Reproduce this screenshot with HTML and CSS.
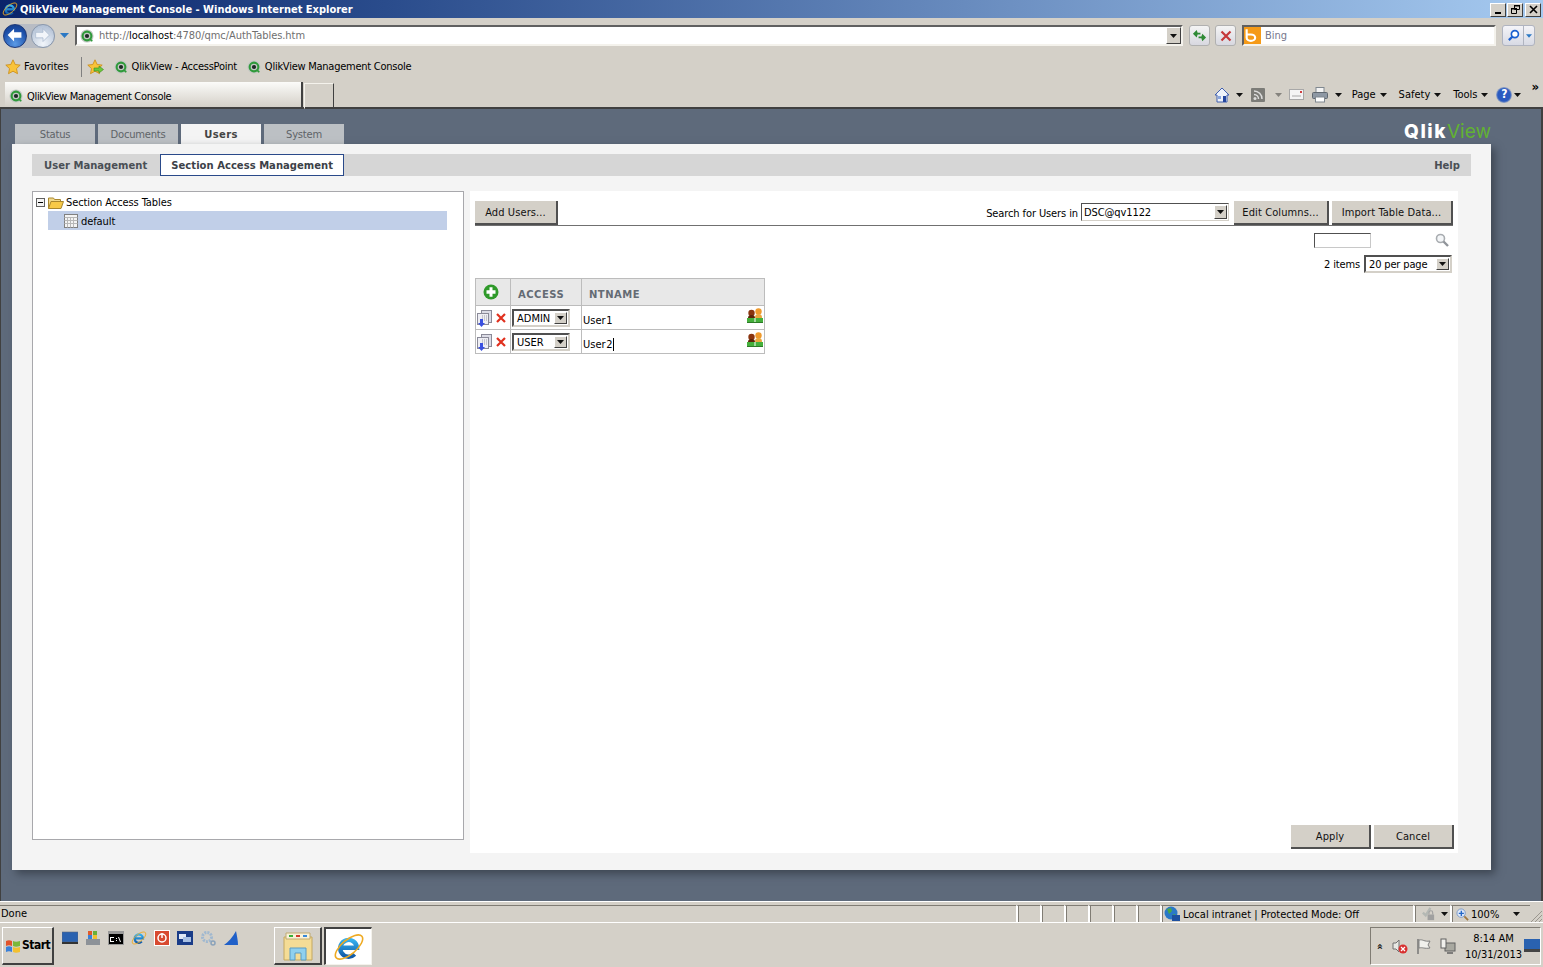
FILE: index.html
```html
<!DOCTYPE html>
<html lang="en">
<head>
<meta charset="utf-8">
<title>QlikView Management Console</title>
<link rel="stylesheet" href="styles.css">
</head>
<body>
<svg class="defs" width="0" height="0">
  <defs>
    <linearGradient id="ieblue" x1="0" y1="0" x2="0" y2="1"><stop offset="0" stop-color="#35b0ee"/><stop offset="1" stop-color="#125aa8"/></linearGradient>
    <symbol id="qv" viewBox="0 0 16 16">
      <circle cx="8" cy="8" r="7.500" fill="#c4c8c4"/>
      <circle cx="8" cy="8" r="5" fill="none" stroke="#2f9a3a" stroke-width="2.400"/>
      <circle cx="8" cy="8" r="2.400" fill="#1f2a26"/>
      <path d="M11 11l3 3" stroke="#2f9a3a" stroke-width="2"/>
    </symbol>
    <symbol id="ie" viewBox="0 0 40 40">
      <path d="M10 21h20A10.500 10.500 0 1 0 27 29" fill="none" stroke="url(#ieblue)" stroke-width="5.500"/>
      <ellipse cx="20" cy="20" rx="21" ry="9" transform="rotate(-40 20 20)" fill="none" stroke="#eeaa22" stroke-width="2"/>
    </symbol>
    <symbol id="docs" viewBox="0 0 15 17">
      <rect x="4.500" y=".5" width="10" height="12" fill="#dcdce6" stroke="#8a8a98"/>
      <rect x=".5" y="3.500" width="11" height="11" fill="#eeeef4" stroke="#8a8a98"/>
      <path d="M5 6h5M5 8h5M5 10h5" stroke="#9c9ca8" stroke-dasharray="1 1"/>
      <path d="M3 9h3v4h2l-3.500 4L1 13h2z" fill="#3a50e0"/>
    </symbol>
    <symbol id="x" viewBox="0 0 10 10">
      <path d="M1 1l8 8M9 1l-8 8" stroke="#e0301e" stroke-width="2.200"/>
    </symbol>
    <symbol id="people" viewBox="0 0 16 15">
      <circle cx="11.500" cy="3.500" r="3.200" fill="#ef9a2c"/>
      <path d="M8 10c0-3 1-4 3.500-4S15 7 15 10z" fill="#e9a63c"/>
      <circle cx="4.500" cy="5" r="3.200" fill="#8a340e"/>
      <path d="M1 10c0-2 1-3 3.500-3S8 8 8 10z" fill="#5e2408"/>
      <path d="M0 10h7.500v4H0zM8.500 10H16v4H8.500z" fill="#45b03c"/>
      <path d="M0 14h16v1H0z" fill="#2c7a26"/>
    </symbol>
    <symbol id="drop" viewBox="0 0 7 4"><path d="M0 0h7L3.500 4z" fill="#111"/></symbol>
    <symbol id="star" viewBox="0 0 16 16">
      <path d="M8 .8l2.200 4.700 5 .6-3.700 3.500 1 5.100L8 12.200 3.500 14.700l1-5.100L.8 6.100l5-.6z" fill="#f9c33a" stroke="#c98a14" stroke-width=".8"/>
    </symbol>
  </defs>
</svg>

<header class="titlebar">
  <div class="titlebar-left">
    <svg class="ico-16"><use href="#ie"/></svg>
    <span class="title-text">QlikView Management Console - Windows Internet Explorer</span>
  </div>
  <div class="wincontrols">
    <span class="winbtn"><svg class="glyph" viewBox="0 0 9 9"><path d="M1 7h6v2H1z" fill="#000"/></svg></span>
    <span class="winbtn"><svg class="glyph" viewBox="0 0 9 9"><path d="M3.500 .5h5v4h-5zM.5 3.500h5v5h-5z" fill="none" stroke="#000"/><path d="M3 0h6v1.500H3zM0 3h6v1.500H0z"/></svg></span>
    <span class="winbtn winbtn-close"><svg class="glyph" viewBox="0 0 9 9"><path d="M1 1l7 7M8 1L1 8" stroke="#000" stroke-width="1.600"/></svg></span>
  </div>
</header>

<div class="navbar">
  <div class="navpill">
    <span class="navround navround-back"><svg viewBox="0 0 24 24"><path d="M4 11l7-7v4h8v6h-8v4z" fill="#fff"/></svg></span>
    <span class="navround navround-fwd"><svg viewBox="0 0 24 24"><path d="M19 11l-7-7v4H4v6h8v4z" fill="#f2f5fa" stroke="#9fb0c8" stroke-width=".7"/></svg></span>
  </div>
  <svg class="nav-drop" viewBox="0 0 9 5"><path d="M0 0h9L4.500 5z" fill="#2b78c4"/></svg>
  <div class="addressbar">
    <svg class="ico-14"><use href="#qv"/></svg>
    <span class="url"><span class="url-dim">http://</span>localhost<span class="url-dim">:4780/qmc/AuthTables.htm</span></span>
    <span class="scrollbtn"><svg class="arrow-s"><use href="#drop"/></svg></span>
  </div>
  <span class="glassbtn glassbtn-refresh">
    <svg viewBox="0 0 16 16"><path d="M1 6l4-4 1 3h3v2H6l-1 3zM15 10l-4 4-1-3H7V9h3l1-3z" fill="#2f8a36"/></svg>
  </span>
  <span class="glassbtn glassbtn-stop">
    <svg viewBox="0 0 12 12"><path d="M1.500 1.500l9 9M10.500 1.500l-9 9" stroke="#c5383a" stroke-width="2.200"/></svg>
  </span>
  <div class="searchbar">
    <span class="bing"><svg viewBox="0 0 16 16"><rect width="16" height="16" fill="#f59a17"/><path d="M2.500 2v8a4 3 0 104-3H3" fill="none" stroke="#fff" stroke-width="2"/></svg></span>
    <span class="bing-label">Bing</span>
  </div>
  <div class="searchgo">
    <span class="searchgo-main"><svg viewBox="0 0 14 14"><circle cx="8.500" cy="5.500" r="3.800" fill="#fff" stroke="#1a5fd0" stroke-width="1.800"/><path d="M6 8l-4 4" stroke="#1a5fd0" stroke-width="2.400"/></svg></span>
    <span class="searchgo-more"><svg viewBox="0 0 7 4"><path d="M0 0h7L3.500 4z" fill="#2b78c4"/></svg></span>
  </div>
</div>

<div class="favbar">
  <svg class="ico-16 fav-star"><use href="#star"/></svg>
  <span class="fav-label">Favorites</span>
  <span class="fav-sep"></span>
  <span class="fav-add">
    <svg viewBox="0 0 17 16"><path d="M8 .8l2.200 4.700 5 .6-3.700 3.500 1 5.100L8 12.200 3.500 14.700l1-5.100L.8 6.100l5-.6z" fill="#f9c33a" stroke="#c98a14" stroke-width=".8"/><path d="M7 9h5V7l4.500 3.500L12 14v-2H7z" fill="#6cc83c" stroke="#3a8a20" stroke-width=".6"/></svg>
  </span>
  <svg class="ico-14 fav-link-ico"><use href="#qv"/></svg>
  <span class="fav-link">QlikView - AccessPoint</span>
  <svg class="ico-14 fav-link-ico fav-link-ico-2"><use href="#qv"/></svg>
  <span class="fav-link">QlikView Management Console</span>
</div>

<div class="tabbar">
  <div class="ietab">
    <svg class="ico-14"><use href="#qv"/></svg>
    <span class="ietab-label">QlikView Management Console</span>
  </div>
  <span class="ietab-new"></span>
  <div class="cmdbar">
    <svg class="cmd-ico" viewBox="0 0 16 16"><path d="M8 1L1 8h2v7h10V8h2z" fill="#eef2fa" stroke="#3f5fb0"/><rect x="9" y="9" width="3" height="6" fill="#23459e"/><rect x="4" y="9" width="3" height="3" fill="#8aa6dc"/></svg>
    <svg class="arrow-s cmd-drop-1"><use href="#drop"/></svg>
    <svg class="cmd-ico cmd-feed" viewBox="0 0 14 14"><rect width="14" height="14" rx="1" fill="#7c7c78"/><circle cx="4" cy="10.500" r="1.500" fill="#ddd"/><path d="M3 6.500a4.500 4.500 0 014.500 4.500M3 3a8 8 0 018 8" fill="none" stroke="#ddd" stroke-width="1.500"/></svg>
    <svg class="arrow-s cmd-drop-dim"><use href="#drop"/></svg>
    <svg class="cmd-ico cmd-mail" viewBox="0 0 16 12"><rect x=".5" y=".5" width="14" height="10" fill="#f4f4f4" stroke="#a8a8a8"/><path d="M3 7h9" stroke="#a8a8a8"/><rect x="11" y="2" width="2" height="2" fill="#d04040"/></svg>
    <svg class="cmd-ico cmd-print" viewBox="0 0 16 16"><rect x="4" y=".5" width="8" height="5" fill="#f4f4f4" stroke="#808890"/><rect x=".5" y="5.500" width="15" height="6" rx="1" fill="#8e98a4" stroke="#606870"/><rect x="3.500" y="10" width="9" height="5" fill="#fff" stroke="#808890"/></svg>
    <svg class="arrow-s cmd-drop-2"><use href="#drop"/></svg>
    <span class="cmd-menu">Page</span><svg class="arrow-s"><use href="#drop"/></svg>
    <span class="cmd-menu cmd-menu-next">Safety</span><svg class="arrow-s"><use href="#drop"/></svg>
    <span class="cmd-menu cmd-menu-next">Tools</span><svg class="arrow-s"><use href="#drop"/></svg>
    <span class="help-ico">?</span><svg class="arrow-s help-drop"><use href="#drop"/></svg>
    <span class="cmd-more">»</span>
  </div>
</div>

<main class="viewport">
  <div class="apptop">
    <nav class="apptabs">
      <span class="apptab">Status</span>
      <span class="apptab">Documents</span>
      <span class="apptab apptab-active">Users</span>
      <span class="apptab">System</span>
    </nav>
    <div class="logo"><span class="logo-qlik">Qlik</span><span class="logo-view">View</span></div>
  </div>
  <section class="sheet">
    <div class="subnav">
      <span class="subtab">User Management</span>
      <span class="subtab subtab-active">Section Access Management</span>
      <span class="subnav-help">Help</span>
    </div>
    <div class="columns">
      <aside class="tree">
        <div class="tree-root">
          <span class="tree-toggle"></span>
          <svg class="tree-folder" viewBox="0 0 16 13"><path d="M.5 12.500V2h5l1 1.500h6V6" fill="#f2d98a" stroke="#a8862e"/><path d="M.5 12.500L3 5.500h12.500l-2.500 7z" fill="#f7c948" stroke="#a8862e"/></svg>
          <span>Section Access Tables</span>
        </div>
        <div class="tree-item">
          <svg class="tree-table" viewBox="0 0 14 14"><rect x=".5" y=".5" width="13" height="13" fill="#f4f4f4" stroke="#808080"/><path d="M.5 3.500h13M3.500 3.500v10M6.500 3.500v10M9.500 3.500v10M.5 6.500h13M.5 9.500h13" stroke="#b8b8b8"/></svg>
          <span>default</span>
        </div>
      </aside>
      <div class="editor">
        <div class="toolbar">
          <span class="flatbtn flatbtn-add">Add Users...</span>
          <div class="toolbar-right">
            <span>Search for Users in</span>
            <span class="select select-dsc">DSC@qv1122<span class="select-arrow"><svg class="arrow-xs"><use href="#drop"/></svg></span></span>
            <span class="flatbtn flatbtn-edit">Edit Columns...</span>
            <span class="flatbtn flatbtn-import">Import Table Data...</span>
          </div>
        </div>
        <div class="filter-row">
          <span class="filter-input"></span>
          <svg class="filter-ico" viewBox="0 0 14 14"><circle cx="5.500" cy="5.500" r="4" fill="#f4f6f8" stroke="#a8acb0" stroke-width="1.600"/><path d="M8.500 8.500l4.500 4.500" stroke="#90949a" stroke-width="2.400"/></svg>
        </div>
        <div class="pager-row">
          <span>2 items</span>
          <span class="select select-page">20 per page<span class="select-arrow"><svg class="arrow-xs"><use href="#drop"/></svg></span></span>
        </div>
        <table class="grid">
          <thead>
            <tr>
              <th class="col-a"><svg class="add-ico" viewBox="0 0 16 16"><circle cx="8" cy="8" r="7.500" fill="#2f9a2a"/><path d="M3.500 6.300h3v-3h3v3h3v3.400h-3v3h-3v-3h-3z" fill="#fff"/></svg></th>
              <th class="col-b">ACCESS</th>
              <th class="col-c">NTNAME</th>
            </tr>
          </thead>
          <tbody>
            <tr>
              <td class="cell-actions"><svg class="row-docs"><use href="#docs"/></svg><svg class="row-x"><use href="#x"/></svg></td>
              <td class="cell-access"><span class="select select-role">ADMIN<span class="select-arrow"><svg class="arrow-xs"><use href="#drop"/></svg></span></span></td>
              <td class="cell-name"><span class="name-text">User 1</span><svg class="row-people"><use href="#people"/></svg></td>
            </tr>
            <tr>
              <td class="cell-actions"><svg class="row-docs"><use href="#docs"/></svg><svg class="row-x"><use href="#x"/></svg></td>
              <td class="cell-access"><span class="select select-role">USER<span class="select-arrow"><svg class="arrow-xs"><use href="#drop"/></svg></span></span></td>
              <td class="cell-name"><span class="name-text name-caret">User 2</span><svg class="row-people"><use href="#people"/></svg></td>
            </tr>
          </tbody>
        </table>
        <div class="actions">
          <span class="flatbtn flatbtn-foot">Apply</span>
          <span class="flatbtn flatbtn-foot">Cancel</span>
        </div>
      </div>
    </div>
  </section>
</main>

<div class="statusbar">
  <span class="status-done">Done</span>
  <span class="status-cell"></span><span class="status-cell"></span><span class="status-cell"></span><span class="status-cell"></span><span class="status-cell"></span><span class="status-cell"></span>
  <span class="status-zone">
    <svg class="zone-ico" viewBox="0 0 16 16"><circle cx="7" cy="7" r="6.500" fill="#2a78c8"/><path d="M3 3l4-1 1 3-3 3zM8 9l3-1 1 3-3 2z" fill="#48a848"/><rect x="8" y="9" width="8" height="6" fill="#1e50a0"/></svg>
    Local intranet | Protected Mode: Off
  </span>
  <span class="status-sec">
    <svg class="sec-ico" viewBox="0 0 16 16"><path d="M2 6l3 3 5-8" fill="none" stroke="#b4b8b4" stroke-width="2.500"/><rect x="7" y="8" width="7" height="6" fill="#a0a0a0"/><path d="M8.500 8V6a2 2 0 014 0v2" fill="none" stroke="#a0a0a0" stroke-width="1.200"/></svg>
    <svg class="arrow-s"><use href="#drop"/></svg>
  </span>
  <span class="status-zoom">
    <svg class="zoom-ico" viewBox="0 0 14 14"><circle cx="5.500" cy="5.500" r="4.500" fill="#dfe8f8" stroke="#7898c8"/><path d="M3 5h2V3h1.500v2h2v1.500h-2v2H5v-2H3z" fill="#2468c8"/><path d="M9 9l4 4" stroke="#a07840" stroke-width="2"/></svg>
    100%
    <svg class="arrow-s zoom-drop"><use href="#drop"/></svg>
  </span>
  <svg class="grip" viewBox="0 0 12 12"><path d="M12 1L1 12M12 5l-7 7M12 9l-3 3" stroke="#9a968e"/></svg>
</div>

<footer class="taskbar">
  <span class="startbtn">
    <svg class="flag" viewBox="0 0 16 16"><path d="M1 3c2-1 4-1 6 0v5c-2-1-4-1-6 0z" fill="#e2532a"/><path d="M8 3c2 1 4 1 7 0v5c-3 1-5 1-7 0z" fill="#7ab83a"/><path d="M1 9c2-1 4-1 6 0v5c-2-1-4-1-6 0z" fill="#3a80d8"/><path d="M8 9c2 1 4 1 7 0v5c-3 1-5 1-7 0z" fill="#f2c030"/></svg>
    Start
  </span>
  <div class="quick">
    <svg class="quick-ico" viewBox="0 0 16 16"><rect y="2" width="16" height="10" fill="#2a62b0" stroke="#5a6a80" stroke-width=".6"/><rect y="12" width="16" height="2" fill="#333"/></svg>
    <svg class="quick-ico" viewBox="0 0 16 16"><rect x="1" y="9" width="14" height="6" fill="#8d9298"/><rect x="3" y="1" width="4" height="4" fill="#e05a2a"/><rect x="8" y="1" width="4" height="4" fill="#6ab03a"/><rect x="3" y="5" width="4" height="4" fill="#3a80d8"/><rect x="8" y="5" width="4" height="4" fill="#f2c030"/></svg>
    <svg class="quick-ico" viewBox="0 0 16 16"><rect y="1" width="16" height="14" fill="#9a9a9a"/><rect x="1" y="4" width="14" height="10" fill="#000"/><path d="M3 7h3v1H3v3h3v1H2V7zM8 8h1v1H8zM8 10h1v1H8zM10 7h1l2 5h-1z" fill="#fff"/></svg>
    <svg class="quick-ico"><use href="#ie"/></svg>
    <svg class="quick-ico" viewBox="0 0 16 16"><rect width="16" height="16" fill="#fff"/><rect x="1" y="1" width="14" height="14" fill="#d84a30"/><circle cx="8" cy="8" r="4" fill="none" stroke="#fff" stroke-width="1.500"/><path d="M8 3v5" stroke="#fff" stroke-width="1.500"/></svg>
    <svg class="quick-ico" viewBox="0 0 16 16"><rect y="1" width="16" height="14" fill="#1a3c88"/><rect x="2" y="4" width="7" height="5" fill="#dfe8f6"/><rect x="6" y="7" width="8" height="5" fill="#a8c0e4"/></svg>
    <svg class="quick-ico" viewBox="0 0 16 16"><circle cx="7" cy="7" r="4.500" fill="none" stroke="#a0b8d0" stroke-width="3" stroke-dasharray="2 1"/><circle cx="13" cy="13" r="2" fill="none" stroke="#8aa2ba" stroke-width="1.500"/></svg>
    <svg class="quick-ico" viewBox="0 0 16 16"><path d="M1 15C5 12 10 7 13 1c1 5 2 10 2 14z" fill="#2060c8"/></svg>
  </div>
  <span class="taskbtn">
    <svg viewBox="0 0 32 32"><path d="M2 7h28v23H2z" fill="#f4dc96" stroke="#c4a860"/><path d="M4 3h24v6H4z" fill="#f8f2da" stroke="#c0aa70"/><path d="M7 5h4v2H7z" fill="#38b038"/><path d="M14 5h4v2h-4z" fill="#d03c2c"/><path d="M21 5h4v2h-4z" fill="#3888d8"/><path d="M8 18h16v12h-5v-7h-6v7H8z" fill="#8fd0ee" stroke="#5a9cc4"/></svg>
  </span>
  <span class="taskbtn taskbtn-active"><svg viewBox="0 0 40 40"><use href="#ie"/></svg></span>
  <div class="tray">
    <span class="tray-up">»</span>
    <svg class="tray-ico" viewBox="0 0 16 16"><path d="M1 5h3l3-3v12l-3-3H1z" fill="#e8e8e4" stroke="#707070"/><circle cx="11" cy="11" r="4.500" fill="#d83030"/><path d="M9 9l4 4M13 9l-4 4" stroke="#fff" stroke-width="1.200"/></svg>
    <svg class="tray-ico" viewBox="0 0 16 16"><path d="M2 1v15" stroke="#707070" stroke-width="1.400"/><path d="M3 2c4-1 5 2 11 1l-2 4 2 3c-6 1-7-1-11 0z" fill="#f0f0ec" stroke="#808080"/></svg>
    <svg class="tray-ico" viewBox="0 0 16 16"><rect x="5" y="5" width="10" height="8" fill="#a8a8a0" stroke="#606060"/><rect x="1" y="1" width="5" height="9" fill="#f0f0ec" stroke="#606060"/><path d="M7 15h6" stroke="#606060" stroke-width="1.500"/></svg>
    <span class="clock"><span>8:14 AM</span><span>10/31/2013</span></span>
    <svg class="tray-desk" viewBox="0 0 16 16"><rect y="1" width="16" height="10" fill="#2a62b0"/><rect y="11" width="16" height="3" fill="#444"/></svg>
  </div>
</footer>
</body>
</html>
```
FILE: styles.css
```css
* { box-sizing: border-box; }
html, body { margin: 0; padding: 0; }
body {
  width: 1543px;
  height: 967px;
  overflow: hidden;
  display: flex;
  flex-direction: column;
  background: #d4d0c8;
  color: #000;
  font-family: "DejaVu Sans", sans-serif;
  font-stretch: condensed;
  font-size: 11px;
  line-height: 13px;
  white-space: nowrap;
}
svg { display: block; flex: none; }
.defs { position: absolute; }
.ico-16 { width: 16px; height: 16px; }
.ico-14 { width: 14px; height: 14px; }
.arrow-s { width: 7px; height: 4px; }
.arrow-xs { width: 7px; height: 4px; }

/* Title bar */
.titlebar {
  height: 18px;
  flex: none;
  display: flex;
  justify-content: space-between;
  align-items: center;
  padding: 0 2px;
  background: linear-gradient(90deg, #0a246a 0%, #2a4c8c 25%, #a6caf0 100%);
}
.titlebar-left { display: flex; align-items: center; gap: 2px; }
.title-text { color: #fff; font-weight: 700; font-stretch: condensed; font-size: 11px; }
.wincontrols { display: flex; padding-top: 1px; }
.winbtn {
  width: 16px; height: 14px; margin-left: 1px;
  display: flex; align-items: center; justify-content: center;
  background: #d4d0c8;
  border: 1px solid; border-color: #fff #404040 #404040 #fff;
}
.winbtn-close { margin-left: 2px; }
.glyph { width: 9px; height: 9px; }

/* Nav bar */
.navbar { height: 30px; flex: none; display: flex; align-items: center; padding: 5px 6px 0 3px; }
.navpill { display: flex; gap: 4px; width: 52px; background: #b8bcc4; border-radius: 12px; }
.navround { width: 24px; height: 24px; border-radius: 50%; display: block; }
.navround svg { width: 22px; height: 22px; }
.navround-back { background: radial-gradient(circle at 50% 85%, #5a9ae6, #1c4ea8 65%, #153a80); border: 1px solid #203a78; }
.navround-fwd { background: radial-gradient(circle at 50% 85%, #f2f6fb, #b4c2d6 80%); border: 1px solid #8a98ac; }
.nav-drop { width: 9px; height: 5px; margin-left: 5px; }
.addressbar {
  margin-left: 6px; width: 1108px; height: 21px;
  display: flex; align-items: center; padding-left: 3px;
  background: #fff;
  border: 2px solid; border-color: #606060 #f4f2ec #f4f2ec #606060;
}
.url { margin-left: 5px; color: #000; flex: 1; letter-spacing: -.05px; }
.url-dim { color: #6f6f6f; }
.scrollbtn {
  width: 15px; height: 17px; display: flex; align-items: center; justify-content: center;
  background: #d4d0c8; border: 1px solid; border-color: #fff #404040 #404040 #fff;
}
.glassbtn {
  width: 21px; height: 21px; display: flex; align-items: center; justify-content: center;
  border: 1px solid #b0b0b0; border-radius: 3px;
  background: linear-gradient(#f4f4f4, #d8d8e0);
}
.glassbtn svg { width: 15px; height: 15px; }
.glassbtn-stop svg { width: 12px; height: 12px; }
.glassbtn-refresh { margin-left: 6px; }
.glassbtn-stop { margin-left: 5px; }
.searchbar {
  margin-left: 6px; width: 254px; height: 21px;
  display: flex; align-items: center;
  background: #fff;
  border: 2px solid; border-color: #606060 #f4f2ec #f4f2ec #606060;
}
.bing { width: 17px; height: 17px; display: block; }
.bing svg { width: 17px; height: 17px; }
.bing-label { margin-left: 4px; color: #77778c; }
.searchgo {
  margin-left: 6px; width: 33px; height: 21px; display: flex;
  border: 1px solid #b0b4c0; border-radius: 3px;
  background: linear-gradient(#f4f4f8, #d8dae4);
}
.searchgo-main { width: 21px; display: flex; align-items: center; justify-content: center; border-right: 1px solid #b0b4c0; }
.searchgo-main svg { width: 13px; height: 13px; }
.searchgo-more { flex: 1; display: flex; align-items: center; justify-content: center; }
.searchgo-more svg { width: 6px; height: 4px; }

/* Favorites */
.favbar { height: 32px; flex: none; display: flex; align-items: center; padding: 5px 0 0 5px; }
.fav-label { margin-left: 3px; }
.fav-sep { width: 1px; height: 20px; margin-left: 12px; background: #808080; }
.fav-add { margin-left: 5px; }
.fav-add svg { width: 17px; height: 16px; }
.fav-link-ico { margin-left: 10px; }
.fav-link-ico-2 { margin-left: 10px; }
.fav-link { margin-left: 4px; letter-spacing: -.25px; }

/* Tab row */
.tabbar { height: 29px; flex: none; display: flex; align-items: flex-end; border-bottom: 2px solid #404040; }
.ietab {
  margin-left: 5px; width: 296px; height: 25px; padding: 3px 0 0 4px;
  display: flex; align-items: center; gap: 4px;
  background: linear-gradient(#fbfbf9, #d4d0c8);
}
.ietab-label { letter-spacing: -.33px; }
.ietab-new {
  width: 30px; height: 25px;
  border-left: 2px solid #404040;
}
.ietab-new::after {
  content: ""; display: block; width: 28px; height: 24px; margin: 1px 0 0 1px;
  border: 1px solid; border-color: #f4f2ec #404040 transparent #f4f2ec;
}
.cmdbar { margin-left: auto; height: 25px; padding-right: 4px; display: flex; align-items: center; gap: 4px; }
.cmd-ico { width: 16px; height: 16px; }
.cmd-drop-1 { margin-left: 2px; }
.cmd-feed { width: 14px; height: 14px; margin-left: 4px; }
.cmd-drop-dim { margin-left: 6px; opacity: .4; }
.cmd-mail { margin-left: 3px; }
.cmd-print { margin-left: 3px; }
.cmd-drop-2 { margin-left: 3px; margin-right: 6px; }
.cmd-menu-next { margin-left: 8px; }
.help-ico {
  width: 16px; height: 16px; margin-left: 4px; border-radius: 50%;
  display: flex; align-items: center; justify-content: center;
  color: #fff; font-weight: 700; font-size: 12px;
  background: radial-gradient(circle, #2a5ac0 55%, #9aa8c4 70%);
}
.help-drop { margin-left: -2px; }
.cmd-more { align-self: flex-start; margin-top: -2px; margin-left: 6px; font-size: 13px; font-weight: 700; }

/* Main viewport */
.viewport {
  flex: 1; min-height: 0;
  display: flex; flex-direction: column;
  padding-top: 15px;
  background: #5e6a7b;
  border-left: 1px solid #404040;
  border-right: 2px solid #404040;
}
.apptop { flex: none; display: flex; justify-content: space-between; align-items: flex-end; margin-left: 14px; margin-right: 50px; height: 20px; }
.apptabs { display: flex; gap: 3px; }
.apptab {
  width: 80px; height: 20px; display: flex; align-items: center; justify-content: center;
  background: #bcc0c4; color: #5f6468;
  font-size: 10px; font-stretch: normal; letter-spacing: -.25px;
}
.apptab-active { background: #f4f4f4; color: #444; font-weight: 700; letter-spacing: .4px; }
.logo { height: 20px; font-family: Inter, "Liberation Sans", sans-serif; font-size: 19px; line-height: 16px; font-stretch: normal; }
.logo-qlik { color: #fff; font-weight: 800; letter-spacing: 1.500px; }
.logo-view { color: #62b233; font-weight: 400; letter-spacing: 0; }
.sheet {
  margin: 0 50px 31px 11px;
  flex: 1; min-height: 0;
  display: flex; flex-direction: column;
  padding: 10px 20px 17px;
  background: #f4f4f4;
  box-shadow: 4px 4px 8px rgba(40, 46, 56, .6);
}
.subnav {
  height: 22px; flex: none; display: flex; align-items: center;
  background: #d6d6d6; color: #4a4f55;
  font-size: 10px; font-weight: 700; font-stretch: normal; letter-spacing: .03px;
}
.subtab { padding: 0 12px; display: flex; align-items: center; height: 22px; }
.subtab-active { margin-left: 1px; width: 184px; padding: 0 10px; background: #fff; border: 1px solid #2a4a8a; color: #3c4148; }
.subnav-help { margin-left: auto; padding-right: 11px; }
.columns { flex: 1; min-height: 0; display: flex; margin-top: 15px; gap: 6px; }
.tree {
  flex: none; width: 432px; margin-bottom: 13px; padding: 2px 16px 0 3px;
  background: #fff; border: 1px solid #a8a8ac; letter-spacing: -.08px;
}
.tree-root { height: 17px; display: flex; align-items: center; }
.tree-toggle {
  width: 9px; height: 9px; margin-right: 3px;
  border: 1px solid #606060;
  background: linear-gradient(#000, #000) center/5px 1px no-repeat, #f4f4f4;
}
.tree-folder { width: 16px; height: 13px; margin-right: 2px; }
.tree-item {
  margin-left: 12px; height: 19px; padding: 1px 0 0 16px;
  display: flex; align-items: center; gap: 3px;
  background: #c1cfe8;
}
.tree-table { width: 14px; height: 14px; }
.editor {
  flex: 1; min-width: 0; display: flex; flex-direction: column;
  margin-right: 13px;
  padding: 10px 5px 4px;
  background: #fff;
}
.toolbar { flex: none; height: 25px; display: flex; justify-content: space-between; border-bottom: 1px solid #707070; }
.toolbar-right { display: flex; align-items: flex-start; letter-spacing: -.1px; }
.toolbar-right > span:first-child { margin-top: 6px; }
.flatbtn {
  height: 24px; display: flex; align-items: center; justify-content: center;
  padding-top: 1px;
  background: #d4d0c8; color: #111; letter-spacing: .1px;
  border-right: 2px solid #505050; border-bottom: 2px solid #505050;
}
.flatbtn-add { width: 83px; }
.flatbtn-edit { margin-left: 5px; width: 95px; }
.flatbtn-import { margin-left: 3px; width: 121px; }
.select {
  display: flex; align-items: center; position: relative;
  background: #fff;
  border: 2px solid; border-color: #505050 #d4d0c8 #d4d0c8 #505050;
}
.select-dsc { margin-left: 3px; margin-top: 2px; width: 148px; height: 18px; padding: 1px 0 0 2px; border-width: 1px; }
.select-arrow {
  position: absolute; right: 1px; top: 1px; bottom: 1px; width: 13px;
  display: flex; align-items: center; justify-content: center;
  background: #d4d0c8; border: 1px solid; border-color: #fff #404040 #404040 #fff;
}
.filter-row { flex: none; height: 24px; display: flex; align-items: center; justify-content: flex-end; padding: 4px 4px 0 0; }
.filter-input { width: 57px; height: 15px; border: 1px solid; border-color: #505050 #c8c8c8 #c8c8c8 #505050; background: #fff; }
.filter-ico { width: 14px; height: 14px; margin-left: 64px; }
.pager-row { flex: none; height: 24px; display: flex; align-items: center; justify-content: flex-end; gap: 4px; padding: 4px 1px 0 0; letter-spacing: -.15px; }
.select-page { width: 88px; height: 18px; padding-left: 3px; }
.grid {
  margin-top: 4px; width: 290px; flex: none;
  border-collapse: collapse; table-layout: fixed;
}
.grid th, .grid td { border: 1px solid #bcbcbc; padding: 0; }
.grid thead th {
  height: 27px; background: #e8e8e8; color: #646b74; text-align: left;
  font-size: 10px; font-stretch: normal; letter-spacing: .5px; font-weight: 700;
  vertical-align: bottom; padding-bottom: 4px;
}
.col-a { width: 35px; }
.col-b { width: 71px; padding-left: 7px !important; }
.col-c { padding-left: 7px !important; }
.add-ico { width: 16px; height: 16px; margin: 0 0 1px 7px; }
.grid tbody td { height: 24px; vertical-align: middle; }
.cell-actions svg { display: inline-block; vertical-align: middle; }
.row-docs { width: 15px; height: 17px; margin: 2px 0 0 1px; }
.row-x { width: 10px; height: 10px; margin-left: 4px; }
.select-role { width: 58px; height: 18px; margin-left: 1px; padding: 1px 0 0 3px; }
.cell-name { position: relative; }
.name-text { padding-left: 1px; position: relative; top: 3px; word-spacing: -2.500px; }
.name-caret { border-right: 1px solid #000; }
.row-people { position: absolute; right: 1px; top: 2px; width: 16px; height: 15px; }
.actions { margin-top: auto; margin-right: -1px; display: flex; justify-content: flex-end; gap: 3px; }
.flatbtn-foot { width: 80px; height: 24px; }

/* Status bar */
.statusbar {
  height: 22px; flex: none; display: flex; align-items: stretch;
  border-top: 1px solid #fff; border-bottom: 1px solid #fff; padding-top: 3px;
}
.status-done, .status-cell, .status-zone, .status-sec, .status-zoom { border-top: 1px solid #807c74; }
.status-done { width: 1016px; padding: 1px 0 0 1px; }
.status-cell, .status-zone, .status-sec, .status-zoom { border-left: 2px solid #fff; box-shadow: inset 1px 0 #807c74; }
.status-cell { width: 24px; }
.status-zone { width: 253px; display: flex; align-items: center; gap: 3px; padding-left: 2px; }
.zone-ico { width: 16px; height: 16px; }
.status-sec { width: 37px; display: flex; align-items: center; gap: 5px; padding-left: 6px; }
.sec-ico { width: 15px; height: 15px; }
.status-zoom { width: 80px; display: flex; align-items: center; gap: 2px; padding-left: 4px; }
.zoom-ico { width: 13px; height: 13px; }
.zoom-drop { margin-left: 12px; }
.grip { width: 12px; height: 12px; align-self: flex-end; margin-left: auto; margin-right: 1px; }

/* Taskbar */
.taskbar { flex: none; height: 44px; display: flex; align-items: flex-start; padding: 4px 2px 0 2px; }
.startbtn {
  width: 52px; height: 38px; display: flex; align-items: center; gap: 1px; padding-left: 2px;
  font-weight: 700; font-size: 12px; letter-spacing: -.5px; background: #d4d0c8;
  border: 1px solid; border-color: #fff #404040 #404040 #fff;
  border-right-width: 2px; border-bottom-width: 2px;
}
.flag { width: 16px; height: 16px; }
.quick { margin-left: 8px; display: flex; gap: 7px; margin-top: 3px; }
.quick-ico { width: 16px; height: 16px; }
.taskbtn {
  margin-left: 2px; width: 48px; height: 38px; display: flex; align-items: center; justify-content: center;
  background: #d4d0c8; border: 1px solid; border-color: #fff #404040 #404040 #fff;
  border-right-width: 2px; border-bottom-width: 2px;
}
.quick + .taskbtn { margin-left: 35px; }
.taskbtn svg { width: 32px; height: 32px; }
.taskbtn-active { background: #fff; border-color: #404040 #f4f2ec #f4f2ec #404040; border-width: 2px 1px 1px 2px; }
.tray {
  margin-left: auto; width: 171px; height: 38px; display: flex; align-items: center; padding-left: 3px;
  border: 1px solid; border-color: #807c74 #fff #fff #807c74;
}
.tray-up { font-size: 11px; font-weight: 700; transform: rotate(-90deg); width: 10px; text-align: center; }
.tray-ico { width: 16px; height: 16px; margin-left: 8px; }
.clock { margin-left: 10px; width: 55px; display: flex; flex-direction: column; align-items: center; gap: 3px; }
.tray-desk { width: 16px; height: 16px; margin-left: 3px; }
```
